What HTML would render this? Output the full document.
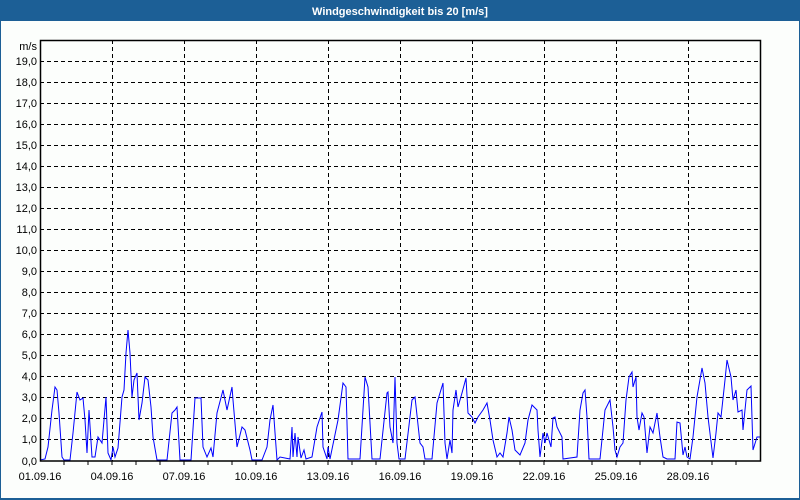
<!DOCTYPE html><html><head><style>
body{margin:0;width:800px;height:500px;overflow:hidden;background:#1c5f96;font-family:"Liberation Sans",sans-serif}
</style></head><body>
<svg width="800" height="500" xmlns="http://www.w3.org/2000/svg" style="position:absolute;left:0;top:0">
<rect x="0" y="0" width="800" height="500" fill="#1c5f96"/>
<rect x="1" y="21" width="798" height="477" fill="#fcfefc"/>
<text x="400" y="15" fill="#fff" font-size="11" font-weight="bold" text-anchor="middle" font-family="Liberation Sans">Windgeschwindigkeit bis 20 [m/s]</text>
<g stroke="#000" stroke-width="1" stroke-dasharray="4,3" fill="none">
<path d="M40 61.5H760M40 82.5H760M40 103.5H760M40 124.5H760M40 145.5H760M40 166.5H760M40 187.5H760M40 208.5H760M40 229.5H760M40 250.5H760M40 271.5H760M40 292.5H760M40 313.5H760M40 334.5H760M40 355.5H760M40 376.5H760M40 397.5H760M40 418.5H760M40 439.5H760"/>
<path d="M112.5 40V461M184.5 40V461M256.5 40V461M328.5 40V461M400.5 40V461M472.5 40V461M544.5 40V461M616.5 40V461M688.5 40V461"/>
</g>
<g font-size="11" fill="#000" text-anchor="end" font-family="Liberation Sans">
<text x="37" y="50">m/s</text>
<text x="37" y="65">19,0</text><text x="37" y="86">18,0</text><text x="37" y="107">17,0</text><text x="37" y="128">16,0</text><text x="37" y="149">15,0</text><text x="37" y="170">14,0</text><text x="37" y="191">13,0</text><text x="37" y="212">12,0</text><text x="37" y="233">11,0</text><text x="37" y="254">10,0</text><text x="37" y="275">9,0</text><text x="37" y="296">8,0</text><text x="37" y="317">7,0</text><text x="37" y="338">6,0</text><text x="37" y="359">5,0</text><text x="37" y="380">4,0</text><text x="37" y="401">3,0</text><text x="37" y="422">2,0</text><text x="37" y="443">1,0</text><text x="37" y="465">0,0</text>
</g>
<g font-size="11" fill="#000" text-anchor="middle" font-family="Liberation Sans">
<text x="40" y="480">01.09.16</text><text x="112" y="480">04.09.16</text><text x="184" y="480">07.09.16</text><text x="256" y="480">10.09.16</text><text x="328" y="480">13.09.16</text><text x="400" y="480">16.09.16</text><text x="472" y="480">19.09.16</text><text x="544" y="480">22.09.16</text><text x="616" y="480">25.09.16</text><text x="688" y="480">28.09.16</text>
</g>
<path d="M64 461v4M88 461v4M112 461v4M136 461v4M160 461v4M184 461v4M208 461v4M232 461v4M256 461v4M280 461v4M304 461v4M328 461v4M352 461v4M376 461v4M400 461v4M424 461v4M448 461v4M472 461v4M496 461v4M520 461v4M544 461v4M568 461v4M592 461v4M616 461v4M640 461v4M664 461v4M688 461v4M712 461v4M736 461v4" stroke="#000"/>
<polyline fill="none" stroke="#0000ff" stroke-width="1" points="40,460 45,459 48,447 52,410 55,387 57,390 59,413 62,457 64,460 70,460 73,433 77,392 80,400 83,398 85,420 87,453 89,410 92,457 95,457 98,437 102,443 104,420 106,397 108,453 111,460 113,447 115,457 118,448 122,397 124,390 126,353 128,330 130,353 132,397 134,380 137,373 138,397 139,420 142,403 145,377 148,380 151,407 153,437 157,460 167,460 172,413 175,410 177,407 180,460 191,460 195,398 201,398 203,447 207,457 211,448 213,457 217,413 223,390 227,410 232,387 233,400 237,447 242,427 245,430 250,450 252,460 262,460 267,447 270,420 273,405 277,460 280,457 290,459 292,427 293,457 295,433 297,457 298,437 301,458 304,450 306,459 312,457 317,427 322,412 323,447 327,459 328,447 330,459 338,420 343,383 346,387 348,459 360,459 365,377 368,387 372,459 380,459 387,393 388,392 390,427 393,443 395,377 397,443 399,459 405,459 412,400 415,397 420,443 423,447 425,459 432,459 437,403 443,383 445,443 447,459 450,440 452,453 453,410 456,390 458,407 462,393 466,378 468,413 472,417 475,423 478,417 483,410 487,403 490,420 493,440 497,457 500,453 503,457 507,433 509,417 512,430 515,450 518,453 520,455 525,443 528,420 532,405 537,410 538,430 540,457 543,433 545,443 547,433 551,447 553,418 555,417 557,427 562,437 563,459 570,458 577,457 580,410 583,393 585,390 587,417 589,459 600,459 605,410 610,400 613,427 615,450 617,457 620,447 623,443 626,400 629,377 632,372 633,387 636,377 637,417 639,430 642,413 644,417 647,453 650,427 653,433 657,413 660,437 663,457 667,459 675,459 677,422 680,423 683,455 685,447 687,457 690,459 693,437 697,397 702,368 705,383 708,417 713,458 716,433 718,413 721,417 725,380 727,360 731,377 733,400 736,390 738,412 742,410 743,430 747,390 751,386 753,450 757,437 760,437"/>
<rect x="40.5" y="40.5" width="720" height="420.5" fill="none" stroke="#000" stroke-width="1.5"/>
</svg>
</body></html>
